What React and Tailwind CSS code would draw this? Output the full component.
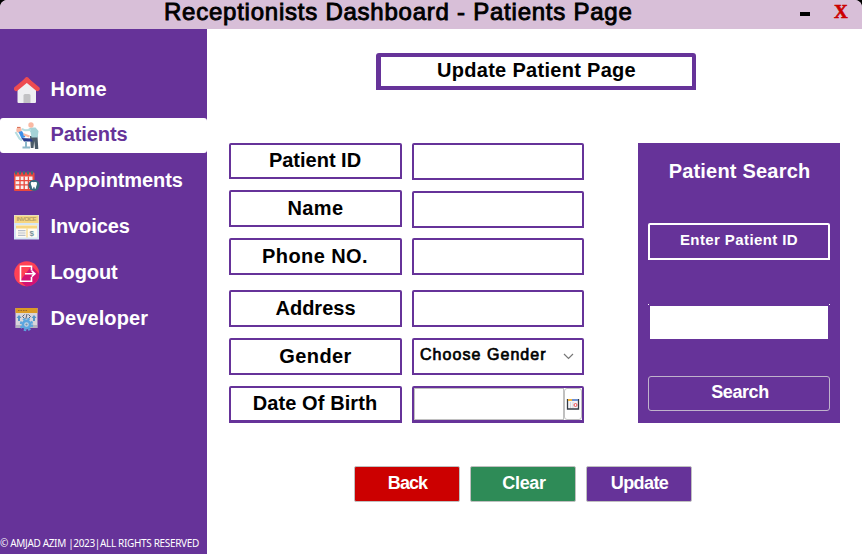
import React from "react";

function HomeIcon() {
  return (
    <svg width="26" height="27" viewBox="0 0 26 27">
      <path d="M3.500 10.500 13 3l9 7.500V26a1 1 0 0 1-1 1H4.500a1 1 0 0 1-1-1z" fill="#efeff1" />
      <path d="M9.500 27v-7.500a1.500 1.500 0 0 1 1.500-1.500h4a1.500 1.500 0 0 1 1.500 1.500V27z" fill="#c2c2c4" />
      <path d="M2.200 12.800 12.800 4l10.600 8.800" fill="none" stroke="#ee4b50" strokeWidth="4.600" strokeLinecap="round" strokeLinejoin="round" />
      <path d="M7 7l4.500-5.500a2 2 0 0 1 2.600 0L19 7z" fill="#ee4b50" />
    </svg>
  );
}

function PatientsIcon() {
  return (
    <svg width="26" height="27" viewBox="0 0 26 27">
      <path d="M16 14h7.500l.8 13H21l-.8-8-.7 7h-2.700z" fill="#4a5b68" />
      <path d="m14 7 3-1.500h4.500L24.500 9l-.8 6.500h-6.200L16.500 10z" fill="#a5d3d7" />
      <path d="m17 8-6 .3-3-1.300" fill="none" stroke="#b6dde0" strokeWidth="2" />
      <circle cx="17" cy="3" r="2.700" fill="#fab9a3" />
      <circle cx="5" cy="8" r="2.700" fill="#fab9a3" />
      <path d="M3 5.400h3.500" stroke="#d7684f" strokeWidth="1" />
      <path d="m1.500 10 4 6.500 2.500 2" fill="none" stroke="#b6dde0" strokeWidth="2" />
      <path d="m4.500 10 3.500-1 3.500 6-4 1.500z" fill="#3d8fe8" />
      <path d="m9.500 12.200 6 2.300" stroke="#fab9a3" strokeWidth="2.200" />
      <path d="m7.500 16 9.500.5 2 3H10z" fill="#293b8c" />
      <path d="M12 19.500v6M8.500 25.500h7.500" stroke="#8cb8c9" strokeWidth="2" />
    </svg>
  );
}

function AppointmentsIcon() {
  return (
    <svg width="26" height="22" viewBox="0 0 26 22">
      <rect y="1.500" width="20.500" height="18.500" rx="1" fill="#e9483d" />
      <path d="M2 0v3.500M6 0v3.500M10 0v3.500M14 0v3.500M18 0v3.500" stroke="#426b78" strokeWidth="2" />
      <path d="M1.500 5.500h17v12.500h-17z" fill="#f7f0ef" />
      <path d="M1.500 9.700h17M1.500 13.900h17M6 5.500v12.500M10.200 5.500v12.500M14.400 5.500v12.500" stroke="#e9483d" strokeWidth="1.300" />
      <circle cx="20" cy="14.300" r="5.600" fill="#37677d" />
      <path d="M16.800 12.500c0-2 1.800-1.800 3-1.200 1.500-.6 3.200-.6 3.200 1.200 0 1.700-.8 2.300-1 4-.3 2-1.300 1.500-1.400.4-.1-1.600-1.200-1.600-1.300 0-.1 1.100-1.200 1.400-1.400-.4-.1-1.800-1.100-2.300-1.100-4z" fill="#fff" />
    </svg>
  );
}

function InvoicesIcon() {
  return (
    <svg width="25" height="25" viewBox="0 0 25 25">
      <path d="M0 0h25v24.500H0z" fill="#d6e6f5" />
      <path d="M2 10h21v12.500H2z" fill="#fffbf1" />
      <path d="M.5.500h24V8H.5zM2 10.500h21v3H2z" fill="#f7d681" />
      <text x="2.500" y="6.300" textLength="20" className="fill-[#b7a16a] font-['Liberation_Sans'] text-[6px] font-bold">INVOICE</text>
      <path d="M4 15.700h7.500M4 18h7.500M4 20.400h7.500" stroke="#b7bdca" strokeWidth="1.200" />
      <path d="M13 13.500v9" stroke="#f7d681" strokeWidth="1.200" />
      <text x="15.500" y="21" className="fill-[#77929b] font-['Liberation_Sans'] text-[8px]">$</text>
    </svg>
  );
}

function LogoutIcon() {
  return (
    <svg width="26" height="26" viewBox="0 0 26 26">
      <circle cx="12.700" cy="12.700" r="12.500" fill="#ff4155" />
      <path d="m17.500 5 7.700 8c0 7-6.200 13-13.200 12.200L6 20z" fill="#d31375" />
      <path d="M17.500 9.500V5.300h-11v15h11V16M11 12.800h9M17.700 9.900l3.200 2.900-3.200 2.900" fill="none" stroke="#fff" strokeWidth="1.600" />
    </svg>
  );
}

function DeveloperIcon() {
  return (
    <svg width="23" height="24" viewBox="0 0 23 24">
      <path d="M.5 0h22v20H.5z" fill="#d9d5da" />
      <path d="M.5 0h22v5H.5z" fill="#dc9b25" />
      <path d="M3 2.500h10" stroke="#98652e" strokeDasharray="1.500 1" />
      <path d="M1 17h21v3H1z" fill="#b3b2be" />
      <path d="m9.500 6.500-2 2 2 2M13.500 6.500l2 2-2 2M12 6l-1.200 5" fill="none" stroke="#52617c" />
      <path d="m4 7 2.500 3H5v3H3v-3H1.500zM19 7l2.500 3H20v3h-2v-3h-1.500z" fill="#5496c8" />
      <circle cx="11.500" cy="16.500" r="5.700" fill="none" stroke="#5ca6df" strokeWidth="2" strokeDasharray="2.500 2" />
      <circle cx="11.500" cy="16.500" r="3.600" fill="#c4d6e4" stroke="#5ca6df" strokeWidth="2.600" />
      <circle cx="11.500" cy="16.500" r="1.100" fill="#7f90a8" />
    </svg>
  );
}

const NAV = [
  { label: "Home", icon: <HomeIcon />, text: "pb-[1px] tracking-[0.2px]" },
  { label: "Patients", icon: <PatientsIcon />, active: true, text: "pb-[3px] tracking-[-0.1px]" },
  { label: "Appointments", icon: <AppointmentsIcon />, text: "-ml-px pb-[3px] tracking-[-0.1px]" },
  { label: "Invoices", icon: <InvoicesIcon />, text: "pb-[3px] tracking-[-0.1px]" },
  { label: "Logout", icon: <LogoutIcon />, text: "pb-[3px] tracking-[-0.1px]" },
  { label: "Developer", icon: <DeveloperIcon />, text: "pb-[3px] tracking-[0.1px]" },
];

function Sidebar() {
  return (
    <aside className="flex w-[207px] flex-col bg-[#663399]">
      <nav className="flex flex-col gap-[11px] pt-[43px]">
        {NAV.map((n) => (
          <a
            key={n.label}
            className={`flex h-[35px] items-center rounded-[3px] text-xl font-bold ${n.active ? "bg-white text-[#663399]" : "text-white"}`}
          >
            <span className="flex w-[49px] justify-center pl-[4px]">{n.icon}</span>
            <span className={`whitespace-nowrap pl-[1.5px] leading-6 ${n.text}`}>{n.label}</span>
          </a>
        ))}
      </nav>
      <p className="mt-auto whitespace-nowrap pb-[4px] font-['Noto_Sans',sans-serif] text-[10px] leading-[14px] tracking-[-0.34px] text-white">
        © AMJAD AZIM |2023|ALL RIGHTS RESERVED
      </p>
    </aside>
  );
}

const ROWS = [
  { label: "Patient ID", box: "mt-0 h-9", field: "mt-0 h-[37px]", text: "pr-px" },
  { label: "Name", box: "mt-[11px] h-[37px]", field: "mt-[11px] h-[37px]", text: "tracking-[0.4px]" },
  { label: "Phone NO.", box: "mt-[11px] h-[37px]", field: "mt-[10px] h-[37px]", text: "pr-px tracking-[0.4px]" },
  { label: "Address", box: "mt-[15px] h-[37px]", field: "mt-[15px] h-[37px]", text: "" },
  { label: "Gender", box: "mt-[11px] h-[37px]", field: "mt-[11px] h-[37px]", text: "tracking-[0.4px]", kind: "select" },
  { label: "Date Of Birth", box: "mt-[11px] h-[37px] border-b-[3px]", field: "mt-[11px] h-[37px] border-b-[3px]", text: "pr-px tracking-[0.1px]", kind: "date" },
];

function Field({ row }) {
  return (
    <div className={`flex rounded-t-[2px] border-2 border-[#663399] bg-white ${row.field}`}>
      {row.kind === "select" && (
        <div className="flex flex-1 items-center justify-between pl-[6px] pr-[8px]">
          <span className="whitespace-nowrap pb-[4px] text-base tracking-[1.05px] [-webkit-text-stroke:0.7px_black]">Choose Gender</span>
          <svg width="11" height="7" viewBox="0 0 11 7">
            <path d="m1 1 4.500 4.500L10 1" fill="none" stroke="#777" strokeWidth="1.200" />
          </svg>
        </div>
      )}
      {row.kind === "date" && (
        <>
          <div className="flex-1 border border-[#c0c0c0]" />
          <div className="flex w-[18px] items-center justify-center rounded-[3px] border border-[#c0c0c0]">
            <svg width="14" height="11" viewBox="0 0 14 11" className="shrink-0">
              <path d="M1.500 .5h11v9.500h-11z" fill="#f5f5f8" stroke="#343b45" strokeWidth="1.300" />
              <path d="M2 0h4v2H2z" fill="#f3b53d" />
              <path d="M6 0h6v2H6z" fill="#6f91d2" />
              <path d="M4.500 3v6M7 3v6" stroke="#d5d8df" />
              <circle cx="9.500" cy="6" r="1.500" fill="none" stroke="#f04e53" />
            </svg>
          </div>
        </>
      )}
    </div>
  );
}

function PatientForm() {
  return (
    <div className="flex gap-[10px]">
      <div className="flex w-[173px] flex-col">
        {ROWS.map((r) => (
          <div key={r.label} className={`flex items-center justify-center rounded-t-[2px] border-2 border-[#663399] pb-[2px] text-xl leading-6 font-bold ${r.box}`}>
            <span className={r.text}>{r.label}</span>
          </div>
        ))}
      </div>
      <div className="flex w-[172px] flex-col">
        {ROWS.map((r) => (
          <Field key={r.label} row={r} />
        ))}
      </div>
    </div>
  );
}

function SearchPanel() {
  return (
    <section className="flex h-[280px] w-[202px] flex-col items-center bg-[#663399] font-bold text-white">
      <h2 className="mt-[16px] pl-px text-xl leading-6 tracking-[0.2px]">Patient Search</h2>
      <div className="mt-[40px] flex h-[37px] w-[182px] items-center justify-center rounded-t-[2px] border-2 border-white pb-[3px] text-[15px] tracking-[0.4px]">
        Enter Patient ID
      </div>
      <div className="mt-[44px] flex h-[2px] w-[182px] justify-between">
        <span className="h-px w-px bg-white" />
        <span className="h-px w-px bg-white" />
      </div>
      <div className="h-[33px] w-[178px] bg-white" />
      <button className="mt-[37px] flex h-[35px] w-[182px] items-center justify-center rounded-[3px] border border-[#c0b3cc] pb-[3px] pl-[2px] text-[18px] tracking-[-0.4px]">
        Search
      </button>
    </section>
  );
}

export default function App() {
  return (
    <div className="h-[554px] w-[862px] bg-black font-['Liberation_Sans',Arial,sans-serif]">
      <div className="flex h-full flex-col rounded-t-[8px] bg-white">
        <header className="flex h-[29px] shrink-0 items-start rounded-t-[7px] bg-[#d8bfd8]">
          <h1 className="ml-[164px] w-[480px] whitespace-nowrap text-2xl leading-6 tracking-[0.76px] text-black [-webkit-text-stroke:0.9px_black]">
            Receptionists Dashboard - Patients Page
          </h1>
          <button aria-label="Minimize" className="mt-[12px] ml-[156px] h-[4px] w-[10px] bg-black" />
          <button className="mt-[1px] ml-[24px] font-['Liberation_Serif',serif] text-[19px] leading-[22px] font-bold text-[#cc0000] [-webkit-text-stroke:0.6px_#cc0000]">X</button>
        </header>
        <div className="flex flex-1">
          <Sidebar />
          <main className="flex flex-1 flex-col">
            <div className="mt-[24px] ml-[169px] flex h-[37px] w-[320px] items-center justify-center rounded-t-[3px] border-4 border-l-[5px] border-[#663399] pb-[3px] text-xl leading-6 font-bold tracking-[0.3px]">
              Update Patient Page
            </div>
            <div className="mt-[53px] ml-[22px] flex gap-[54px]">
              <PatientForm />
              <SearchPanel />
            </div>
            <div className="mt-[43px] ml-[147px] flex gap-[10px] text-lg font-bold text-white">
              <button className="flex h-9 w-[106px] items-center justify-center rounded-[2px] border border-[#c0c0c0] bg-[#cc0000] pb-[3px] pl-px tracking-[-0.9px]">Back</button>
              <button className="flex h-9 w-[106px] items-center justify-center rounded-[2px] border border-[#c0c0c0] bg-[#2e8b57] pb-[3px] pl-[2px] tracking-[-0.3px]">Clear</button>
              <button className="flex h-9 w-[106px] items-center justify-center rounded-[2px] border border-[#c0c0c0] bg-[#663399] pb-[3px] pl-px tracking-[-0.6px]">Update</button>
            </div>
          </main>
        </div>
      </div>
    </div>
  );
}
